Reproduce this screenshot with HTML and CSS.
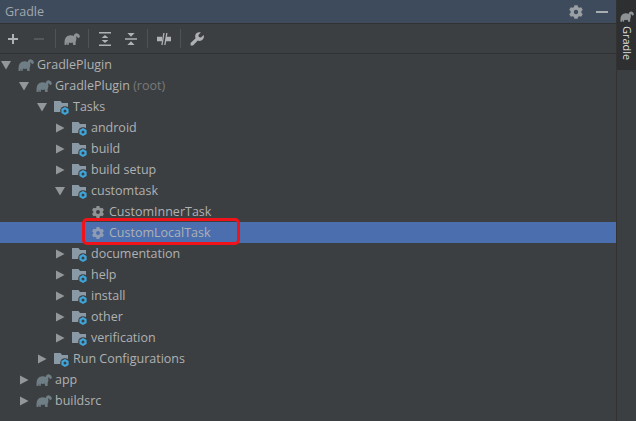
FILE: index.html
```html
<!DOCTYPE html>
<html lang="en">
<head>
<meta charset="utf-8">
<title>Gradle</title>
<link rel="stylesheet" href="styles.css">
</head>
<body>
<svg class="defs" width="0" height="0" aria-hidden="true">
  <defs>
    <symbol id="elephant" viewBox="0 0 16 12">
      <path d="M.6 12 C.2 8 .8 4.6 3.4 3.1 C5.8 1.8 8.4 2.3 9.8 3 C10 1.2 11.6 0 13.2 .4 C15 .8 16 2.4 15.8 3.8 C15.6 5 14.2 5.4 13.6 4.4 C13.4 3.6 12.6 3.2 12 3.8 C12.5 5 12.6 6 12.1 7.5 L11.6 9 V12 H9.2 L8.8 9.6 C7.4 10 6.2 10 5 9.6 L4.6 12 H3.4 L3 9.6 L2.4 12 Z" fill="currentColor"/>
    </symbol>
    <symbol id="folder" viewBox="0 0 16 16">
      <path d="M0 2 H6.5 L8 4 H14 V13 H0 Z" fill="#8a99a6"/>
      <circle cx="11" cy="12" r="4.8" fill="#3c3f41"/>
      <path d="M11 8 L14.6 10 V14 L11 16 L7.4 14 V10 Z" fill="#3fa6dc"/>
      <circle cx="11" cy="12" r="1.5" fill="#3c3f41"/>
    </symbol>
    <symbol id="gear" viewBox="0 0 16 16">
      <path fill-rule="evenodd" d="M6.4 1.2 H9.6 L10 3 L11.4 3.8 L13.2 3.2 L14.8 5.9 L13.4 7.1 V8.9 L14.8 10.1 L13.2 12.8 L11.4 12.2 L10 13 L9.6 14.8 H6.4 L6 13 L4.6 12.2 L2.8 12.8 L1.2 10.1 L2.6 8.9 V7.1 L1.2 5.9 L2.8 3.2 L4.6 3.8 L6 3 Z M8 5.8 A2.2 2.2 0 1 0 8 10.2 A2.2 2.2 0 1 0 8 5.8 Z" fill="currentColor"/>
    </symbol>
    <symbol id="down" viewBox="0 0 10 10"><path d="M0 1 H10 L5 9.5 Z" fill="#94979a"/></symbol>
    <symbol id="right" viewBox="0 0 10 10"><path d="M1 .5 L9.5 5 L1 9.5 Z" fill="#94979a"/></symbol>
  </defs>
</svg>
<div class="window">
  <main class="panel">
    <header class="titlebar">
      <span class="title">Gradle</span>
      <div class="title-actions">
        <svg class="title-gear" width="16" height="16"><use href="#gear"/></svg>
        <span class="minimize"></span>
      </div>
    </header>
    <div class="toolbar">
      <svg class="tool" viewBox="0 0 14 14"><path d="M6 2 H8 V6 H12 V8 H8 V12 H6 V8 H2 V6 H6 Z" fill="#afb1b3"/></svg>
      <svg class="tool gap" viewBox="0 0 14 14"><path d="M2 6 H12 V8 H2 Z" fill="#55585a"/></svg>
      <span class="sep"></span>
      <svg class="tool-wide"><use href="#elephant"/></svg>
      <span class="sep"></span>
      <svg class="tool" viewBox="0 0 14 14"><path d="M1 0 H13 V1.6 H1 Z M1 12.4 H13 V14 H1 Z M3.6 6 L7 3 L10.4 6 Z M3.6 8 H10.4 L7 11 Z" fill="#afb1b3"/></svg>
      <svg class="tool gap" viewBox="0 0 14 14"><path d="M1 6.2 H13 V7.8 H1 Z M3.4 1 H10.6 L7 4.8 Z M7 9.2 L10.6 13 H3.4 Z" fill="#afb1b3"/></svg>
      <span class="sep"></span>
      <svg class="tool" viewBox="0 0 14 14"><path d="M0 4.8 H5 V9.2 H0 Z M9 4.8 H14 V9.2 H9 Z M6.3 1 H7.6 L5.6 13 H4.3 Z M9.2 1 H10.5 L8.5 13 H7.2 Z" fill="#afb1b3"/></svg>
      <span class="sep"></span>
      <svg class="tool" viewBox="0 0 14 14"><path d="M13.6 3 L11 5.4 L8.8 5 L8.4 3 L10.8 .6 C8.6 -.2 6 .8 5.4 3 C5 4.4 5.2 5.4 5.6 6.2 L.6 11 V13.6 H3 L7.8 8.6 C8.6 9 10 9.2 11.4 8.6 C13.6 7.6 14.4 5 13.6 3 Z" fill="#afb1b3"/></svg>
    </div>
    <ul class="tree">
      <li class="row d0"><svg class="arrow"><use href="#down"/></svg><svg class="ico-el"><use href="#elephant"/></svg><span>GradlePlugin</span></li>
      <li class="row d1"><svg class="arrow"><use href="#down"/></svg><svg class="ico-el"><use href="#elephant"/></svg><span>GradlePlugin <em>(root)</em></span></li>
      <li class="row d2"><svg class="arrow"><use href="#down"/></svg><svg class="ico"><use href="#folder"/></svg><span>Tasks</span></li>
      <li class="row d3"><svg class="arrow"><use href="#right"/></svg><svg class="ico"><use href="#folder"/></svg><span>android</span></li>
      <li class="row d3"><svg class="arrow"><use href="#right"/></svg><svg class="ico"><use href="#folder"/></svg><span>build</span></li>
      <li class="row d3"><svg class="arrow"><use href="#right"/></svg><svg class="ico"><use href="#folder"/></svg><span>build setup</span></li>
      <li class="row d3"><svg class="arrow"><use href="#down"/></svg><svg class="ico"><use href="#folder"/></svg><span>customtask</span></li>
      <li class="row d4"><svg class="ico gear"><use href="#gear"/></svg><span>CustomInnerTask</span></li>
      <li class="row d4 selected"><svg class="ico gear"><use href="#gear"/></svg><span>CustomLocalTask</span><div class="highlight"></div></li>
      <li class="row d3"><svg class="arrow"><use href="#right"/></svg><svg class="ico"><use href="#folder"/></svg><span>documentation</span></li>
      <li class="row d3"><svg class="arrow"><use href="#right"/></svg><svg class="ico"><use href="#folder"/></svg><span>help</span></li>
      <li class="row d3"><svg class="arrow"><use href="#right"/></svg><svg class="ico"><use href="#folder"/></svg><span>install</span></li>
      <li class="row d3"><svg class="arrow"><use href="#right"/></svg><svg class="ico"><use href="#folder"/></svg><span>other</span></li>
      <li class="row d3"><svg class="arrow"><use href="#right"/></svg><svg class="ico"><use href="#folder"/></svg><span>verification</span></li>
      <li class="row d2"><svg class="arrow"><use href="#right"/></svg><svg class="ico"><use href="#folder"/></svg><span>Run Configurations</span></li>
      <li class="row d1"><svg class="arrow"><use href="#right"/></svg><svg class="ico-el"><use href="#elephant"/></svg><span>app</span></li>
      <li class="row d1"><svg class="arrow"><use href="#right"/></svg><svg class="ico-el"><use href="#elephant"/></svg><span>buildsrc</span></li>
    </ul>
  </main>
  <aside class="strip">
    <div class="tab">
      <svg class="tab-ico"><use href="#elephant"/></svg>
      <span class="tab-label">Gradle</span>
    </div>
  </aside>
</div>
</body>
</html>
```
FILE: styles.css
```css
* { box-sizing: border-box; }
html, body { margin: 0; height: 100%; }
body { background: #3c3f41; font-family: "Open Sans", "Noto Sans", sans-serif; font-size: 12.5px; color: #afb1b3; overflow: hidden; }
.defs { position: absolute; }
.window { display: flex; height: 421px; }
.panel { flex: 1; min-width: 0; display: flex; flex-direction: column; }
.titlebar { height: 24px; background: #3d4b5c; border-bottom: 1px solid #323232; display: flex; align-items: center; justify-content: space-between; padding: 0 8px 0 5px; }
.title { color: #a3a8ad; font-size: 12.5px; }
.title-actions { display: flex; align-items: center; gap: 12px; }
.title-gear { color: #9a9fa4; display: block; }
.minimize { display: block; width: 12px; height: 2px; background: #a8adb2; }
.toolbar { height: 30px; border-bottom: 1px solid #323232; display: flex; align-items: center; padding: 0 0 0 6px; }
.tool { width: 14px; height: 14px; display: block; flex: none; }
.gap { margin-left: 12px; }
.tool-wide { width: 16px; height: 12px; display: block; flex: none; margin: 0 -1px; color: #8e9295; }
.sep { width: 1px; height: 19px; background: #505355; margin: 0 9px; flex: none; }
.tree { list-style: none; margin: 0; padding: 0; }
.row { position: relative; height: 21px; display: flex; align-items: center; white-space: nowrap; }
.row em { font-style: normal; color: #777a7c; }
.d0 { padding-left: 1px; }
.d1 { padding-left: 19px; }
.d2 { padding-left: 37px; }
.d3 { padding-left: 55px; }
.d4 { padding-left: 91px; }
.arrow { width: 10px; height: 10px; margin-right: 7px; flex: none; }
.ico { width: 16px; height: 16px; margin-right: 3px; flex: none; }
.ico-el { width: 16px; height: 12px; margin-right: 3px; flex: none; color: #6f7d85; }
.gear { color: #8f9396; width: 14px; height: 14px; margin-right: 4px; }
.selected { background: #4b6eaf; }
.selected .gear { color: #8f9cb4; }
.highlight { position: absolute; left: 82px; top: -4px; width: 158px; height: 27px; border: 3px solid #f0141a; border-radius: 5px; }
.strip { width: 20px; flex: none; background: #3c3f41; border-left: 1px solid #323232; }
.tab { height: 70px; background: #2d2f30; display: flex; flex-direction: column; align-items: center; padding-top: 11px; gap: 4px; }
.tab-ico { width: 14px; height: 11px; display: block; flex: none; margin-left: 1px; color: #8e9295; }
.tab-label { writing-mode: vertical-rl; color: #d8dadb; font-size: 11px; line-height: 14px; }
```
